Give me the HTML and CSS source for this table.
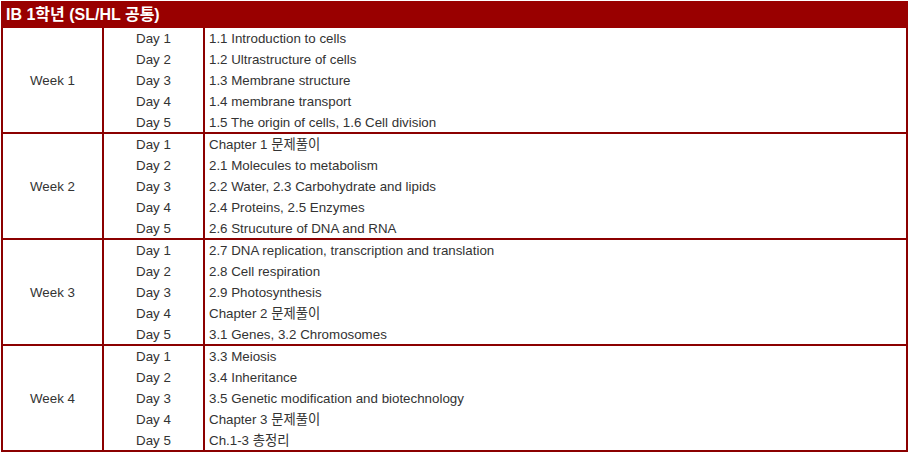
FILE: index.html
```html
<!DOCTYPE html>
<html lang="ko">
<head>
<meta charset="utf-8">
<link rel="stylesheet" href="styles.css">
</head>
<body>
<div class="sheet">
  <div class="title">IB 1학년 (SL/HL 공통)</div>
  <div class="week">
    <div class="wk">Week 1</div>
    <div class="days"><div>Day 1</div><div>Day 2</div><div>Day 3</div><div>Day 4</div><div>Day 5</div></div>
    <div class="topics"><div>1.1 Introduction to cells</div><div>1.2 Ultrastructure of cells</div><div>1.3 Membrane structure</div><div>1.4 membrane transport</div><div>1.5 The origin of cells, 1.6 Cell division</div></div>
  </div>
  <div class="week">
    <div class="wk">Week 2</div>
    <div class="days"><div>Day 1</div><div>Day 2</div><div>Day 3</div><div>Day 4</div><div>Day 5</div></div>
    <div class="topics"><div>Chapter 1 문제풀이</div><div>2.1 Molecules to metabolism</div><div>2.2 Water, 2.3 Carbohydrate and lipids</div><div>2.4 Proteins, 2.5 Enzymes</div><div>2.6 Strucuture of DNA and RNA</div></div>
  </div>
  <div class="week">
    <div class="wk">Week 3</div>
    <div class="days"><div>Day 1</div><div>Day 2</div><div>Day 3</div><div>Day 4</div><div>Day 5</div></div>
    <div class="topics"><div>2.7 DNA replication, transcription and translation</div><div>2.8 Cell respiration</div><div>2.9 Photosynthesis</div><div>Chapter 2 문제풀이</div><div>3.1 Genes, 3.2 Chromosomes</div></div>
  </div>
  <div class="week">
    <div class="wk">Week 4</div>
    <div class="days"><div>Day 1</div><div>Day 2</div><div>Day 3</div><div>Day 4</div><div>Day 5</div></div>
    <div class="topics"><div>3.3 Meiosis</div><div>3.4 Inheritance</div><div>3.5 Genetic modification and biotechnology</div><div>Chapter 3 문제풀이</div><div>Ch.1-3 총정리</div></div>
  </div>
</div>
</body>
</html>
```
FILE: styles.css
```css
html, body {
  margin: 0;
  padding: 0;
  background: #ffffff;
}
body {
  padding: 1px 0 0 1px;
  font-family: "Liberation Sans", Arial, "Noto Sans CJK KR", sans-serif;
  font-size: 13.33px;
  color: #333333;
}
.sheet {
  width: 907px;
  box-sizing: border-box;
}
.title {
  height: 27px;
  background: #990000;
  color: #ffffff;
  font-weight: bold;
  font-size: 16px;
  line-height: 27px;
  padding-left: 5px;
}
.week {
  display: flex;
  height: 106px;
  box-sizing: border-box;
  border-left: 2px solid #8b0000;
  border-right: 2px solid #8b0000;
  border-bottom: 2px solid #8b0000;
}
.wk {
  width: 99px;
  border-right: 2px solid #8b0000;
  display: flex;
  align-items: center;
  justify-content: center;
}
.days {
  width: 99px;
  border-right: 2px solid #8b0000;
  display: flex;
  flex-direction: column;
  text-align: center;
}
.topics {
  flex: 1;
  display: flex;
  flex-direction: column;
  padding-left: 4px;
}
.days > div, .topics > div {
  height: 21px;
  line-height: 21px;
  white-space: nowrap;
}
.days > div:last-child, .topics > div:last-child {
  height: 20px;
  line-height: 22px;
}
```
